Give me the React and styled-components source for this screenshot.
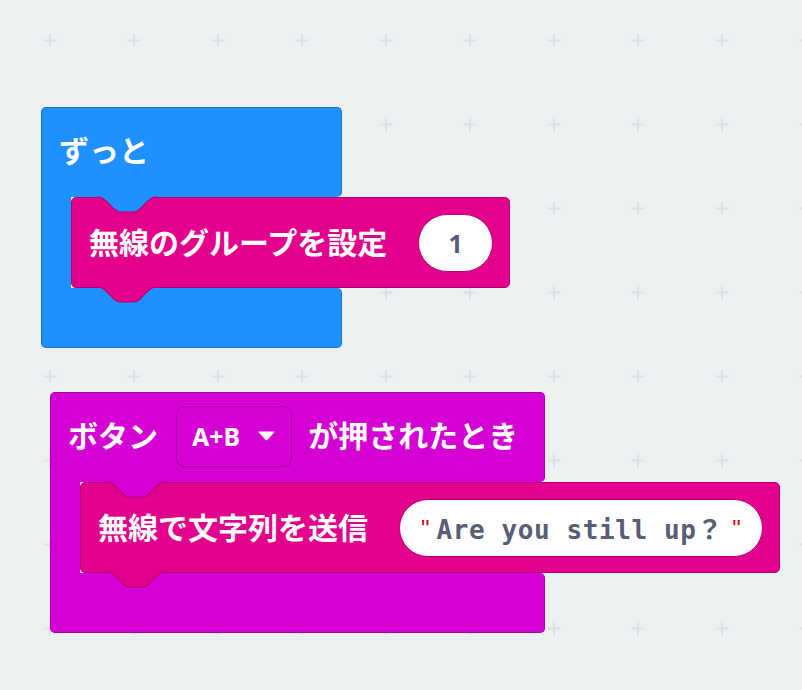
import React from 'react';
import styled, { createGlobalStyle } from 'styled-components';

const GlobalStyle = createGlobalStyle`
  html, body {
    margin: 0;
    padding: 0;
    background: #ecf0f1;
  }
`;

const Workspace = styled.div`
  position: relative;
  width: 802px;
  height: 690px;
  overflow: hidden;
  background: #ecf0f1;
  font-family: 'Noto Sans', 'Noto Sans CJK JP', sans-serif;
  color: #fff;
`;

const GridLayer = styled.svg`
  position: absolute;
  inset: 0;
  width: 100%;
  height: 100%;
`;

// blocks sit on the canvas at their workspace coordinates
const Placed = styled.div`
  position: absolute;
  left: ${(p) => p.$x}px;
  top: ${(p) => p.$y}px;
`;

const CBlock = styled.div`
  display: flex;
  flex-direction: column;
  align-items: flex-start;
`;

const CHeader = styled.div`
  box-sizing: border-box;
  width: ${(p) => p.$width}px;
  min-height: 90px;
  display: flex;
  align-items: center;
  gap: 16px;
  padding: 0 24px 3px 17px;
  background: ${(p) => p.$fill};
  border: 1px solid ${(p) => p.$edge};
  border-bottom: none;
  border-radius: 5px 5px 5px 0;
`;

const CMouth = styled.div`
  display: flex;
  align-items: stretch;
`;

const CArm = styled.div`
  box-sizing: border-box;
  width: 30px;
  background: ${(p) => p.$fill};
  border-left: 1px solid ${(p) => p.$edge};
`;

const CFooter = styled.div`
  box-sizing: border-box;
  width: ${(p) => p.$width}px;
  height: 60px;
  background: ${(p) => p.$fill};
  border: 1px solid ${(p) => p.$edge};
  border-top: none;
  border-radius: 0 5px 5px 5px;
`;

const Label = styled.span`
  font-size: 30px;
  font-weight: 700;
  line-height: 1;
  white-space: nowrap;
`;

const Statement = styled.div`
  position: relative;
  z-index: 1;
  box-sizing: border-box;
  min-height: 91px;
  display: flex;
  align-items: center;
  gap: 31px;
  padding: 0 16px 0 17px;
  background: #e3008c;
  border: 1px solid #b5006f;
  border-radius: 5px;
`;

const Notch = styled.svg`
  position: absolute;
  left: 25px;
  top: -1px;
  overflow: visible;
`;

const Tab = styled.svg`
  position: absolute;
  left: 25px;
  top: 100%;
  overflow: visible;
`;

const Dropdown = styled.div`
  box-sizing: border-box;
  height: 61px;
  display: flex;
  align-items: center;
  gap: 18px;
  padding: 0 16px 0 15px;
  margin-left: 2px;
  background: #d400d4;
  border: 1px solid #a300a3;
  border-radius: 8px;
  font-size: 25px;
  font-weight: 700;
`;

const Pill = styled.div`
  box-sizing: border-box;
  height: 58px;
  min-width: 75px;
  display: flex;
  align-items: center;
  justify-content: center;
  padding: 0 21px;
  background: #fff;
  border: 1px solid #b5006f;
  border-radius: 29px;
  color: #575e75;
`;

const NumberText = styled.span`
  font-family: 'Noto Sans', sans-serif;
  font-size: 25px;
  font-weight: 700;
`;

const StringText = styled.span`
  font-family: 'DejaVu Sans Mono', 'Noto Sans CJK JP', monospace;
  font-size: 26px;
  font-weight: 700;
  letter-spacing: 0.6px;
  white-space: nowrap;
`;

const Quote = styled.span`
  font-family: 'Liberation Sans', sans-serif;
  color: #c8101a;
  font-size: 24px;
  font-weight: 400;
  letter-spacing: 0;
  vertical-align: 2px;
  margin: ${(p) => (p.$end ? '0 0 0 9px' : '0 7px 0 0')};
`;

const notchPath =
  'M0 0 C5 0 7 2 10 5 L17 12 C19.5 14.5 21 15 24 15 L36 15 C39 15 40.5 14.5 43 12 L50 5 C53 2 55 0 60 0';

function NotchCut({ fill, edge }) {
  return (
    <Notch width='60' height='16' viewBox='0 0 60 16'>
      <path d={notchPath + ' Z'} fill={fill} />
      <path d={notchPath} fill='none' stroke={edge} strokeWidth='1.2' />
    </Notch>
  );
}

function NextTab({ fill, edge }) {
  return (
    <Tab width='60' height='16' viewBox='0 0 60 16'>
      <path d={notchPath + ' Z'} fill={fill} />
      <path d={notchPath} fill='none' stroke={edge} strokeWidth='1.2' />
    </Tab>
  );
}

function StatementBlock({ parent, children }) {
  return (
    <Statement>
      <NotchCut fill={parent} edge='#b5006f' />
      {children}
      <NextTab fill='#e3008c' edge='#b5006f' />
    </Statement>
  );
}

function HatBlock({ width, fill, edge, header, children }) {
  return (
    <CBlock>
      <CHeader $width={width} $fill={fill} $edge={edge}>
        {header}
      </CHeader>
      <CMouth>
        <CArm $fill={fill} $edge={edge} />
        {children}
      </CMouth>
      <CFooter $width={width} $fill={fill} $edge={edge} />
    </CBlock>
  );
}

function GridDots() {
  return (
    <GridLayer>
      <defs>
        <pattern
          id='ws-grid'
          x='8'
          y='-1.5'
          width='84'
          height='84'
          patternUnits='userSpaceOnUse'
        >
          <path
            d='M35.5 42 H48.5 M42 35.5 V48.5'
            stroke='#d8dcdf'
            strokeWidth='1.5'
          />
        </pattern>
      </defs>
      <rect width='100%' height='100%' fill='url(#ws-grid)' />
    </GridLayer>
  );
}

function Caret() {
  return (
    <svg width='17' height='10' viewBox='0 0 17 10'>
      <path d='M1 0.5 H16 Q17 0.5 16.2 1.4 L9.3 8.9 Q8.5 9.7 7.7 8.9 L0.8 1.4 Q0 0.5 1 0.5 Z' fill='#fff' />
    </svg>
  );
}

export default function App() {
  return (
    <Workspace>
      <GlobalStyle />
      <GridDots />

      <Placed $x={41} $y={107}>
        <HatBlock
          width={301}
          fill='#1e90ff'
          edge='#1873d3'
          header={<Label>ずっと</Label>}
        >
          <StatementBlock parent='#1e90ff'>
            <Label>無線のグループを設定</Label>
            <Pill>
              <NumberText>1</NumberText>
            </Pill>
          </StatementBlock>
        </HatBlock>
      </Placed>

      <Placed $x={50} $y={392}>
        <HatBlock
          width={495}
          fill='#d400d4'
          edge='#a300a3'
          header={
            <>
              <Label>ボタン</Label>
              <Dropdown>
                A+B
                <Caret />
              </Dropdown>
              <Label>が押されたとき</Label>
            </>
          }
        >
          <StatementBlock parent='#d400d4'>
            <Label>無線で文字列を送信</Label>
            <Pill>
              <StringText>
                <Quote>"</Quote>
                Are you still up？
                <Quote $end>"</Quote>
              </StringText>
            </Pill>
          </StatementBlock>
        </HatBlock>
      </Placed>
    </Workspace>
  );
}
